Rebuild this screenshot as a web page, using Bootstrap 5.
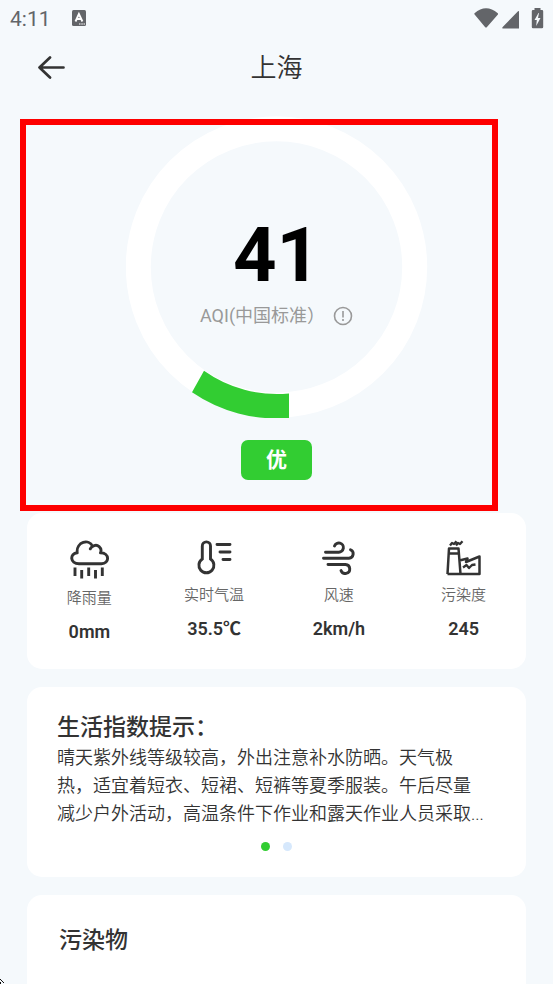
<!DOCTYPE html>
<html lang="zh-CN">
<head>
<meta charset="utf-8">
<meta name="viewport" content="width=device-width, initial-scale=1">
<title>上海</title>
<link href="https://cdn.jsdelivr.net/npm/bootstrap@5.3.0/dist/css/bootstrap.min.css" rel="stylesheet">
<style>
  body { background: #f5f9fc; color: #333; font-family: Roboto, "Noto Sans CJK SC", sans-serif; }
  svg { display: block; }
  .status { height: 38px; padding: 0 10px; color: #636569; font-size: 21px; line-height: 38px; }
  .status-icons { margin: 0 -1px 2px 0; }
  .app-badge { margin: 0 0 2px 21px; }
  .topbar { height: 60px; padding: 0 37px; display: grid; grid-template-columns: 1fr auto 1fr; align-items: center; }
  .topbar h1 { font-size: 26px; line-height: 36px; font-weight: 350; }
  .gauge { height: 413px; padding-top: 18px; }
  .ring { width: 302px; height: 302px; }
  .ring > * { grid-area: 1 / 1; }
  .reading { padding-top: 94px; }
  .aqi { font-size: 76px; line-height: 90px; font-weight: 700; color: #000; }
  .scale { font-size: 18px; line-height: 28px; color: #999; gap: 8px; margin-top: 2px; }
  .level { background: #32cd32; color: #fff; font-size: 21px; line-height: 40px; font-weight: 700; width: 71px; border-radius: 7px; margin-top: 22px; }
  .marker { inset: 21px 55px 0 20px; border: 6px solid #fe0000; pointer-events: none; }
  .panels { padding: 2px 27px 0; gap: 18px; }
  .panel { background: #fff; border-radius: 15px; }
  .stats { padding: 27px 0 25px; }
  .stats dt { font-size: 15px; line-height: 22px; font-weight: 350; color: #666; margin-top: 8px; }
  .stats dd { font-size: 18px; line-height: 24px; font-weight: 600; margin: 11px 0 0; }
  .tips { padding: 25px 38px 26px 30px; }
  .panel h2 { font-size: 23px; line-height: 32px; font-weight: 500; }
  .tips p { font-size: 18px; line-height: 28px; font-weight: 350; }
  .dots { gap: 13px; margin: 14px -8px 0 0; }
  .dot { width: 9px; height: 9px; border: 0; padding: 0; border-radius: 50%; background: #d6e8fc; }
  .dot.active { background: #32cd32; }
  .pollutants { padding: 30px 32px; border-radius: 15px 15px 0 0; }
  .pointer { left: 0; bottom: 0; }
</style>
</head>
<body class="d-flex flex-column min-vh-100">
<div class="status d-flex align-items-center">
  <span>4:11</span>
  <svg class="app-badge" width="14" height="16" viewBox="0 0 14 16" aria-hidden="true"><rect width="14" height="16" rx="1.5" fill="#636569"/><path d="M3.500 11.500 6.900 4 10.400 11.500M4.800 9H9" fill="none" stroke="#fff" stroke-width="1.900"/><path d="M7 14h1.500M9.300 14h1.500M11.500 14H13" stroke="#fff" stroke-width="1.200"/></svg>
  <svg class="status-icons ms-auto" width="70" height="22" viewBox="0 0 70 22" fill="#636569" aria-hidden="true"><path d="M0.500 6.200Q12-3.500 23.800 6.200Q24.300 7 23.700 7.700L13 20Q12 21 11 20L.8 7.700Q0 7 .5 6.200Z"/><path d="M45 4v17.500H29.500q-2 0-.8-1.500L44 4.300Q45 3.500 45 4.500Z"/><path d="M60.500 3V1h6v2h1.500q1.200 0 1.200 1.200V20q0 1.200-1.200 1.200h-9q-1.200 0-1.200-1.200V4.200Q57.800 3 59 3ZM64.500 6 60.500 13h2.300l-.6 6 4.300-8h-2.500l1-5Z" fill-rule="evenodd"/></svg>
</div>
<header class="topbar">
  <button class="btn border-0 p-0 me-auto" type="button" aria-label="返回"><svg width="28" height="24" viewBox="0 0 28 24" fill="none" stroke="#333" stroke-width="2.700" stroke-linecap="round" stroke-linejoin="round"><path d="M26.500 11.500H2.500M13 1.500 2.500 11.500 13 21.500"/></svg></button>
  <h1 class="m-0">上海</h1>
</header>
<main class="d-flex flex-column flex-grow-1">
  <section class="gauge position-relative d-flex flex-column align-items-center">
    <div class="ring d-grid">
      <svg width="302" height="302" viewBox="0 0 302 302" aria-hidden="true"><circle cx="150.500" cy="151" r="138.200" fill="none" stroke="#fff" stroke-width="25"/><path d="M163 302A151 151 0 0 1 66 276.200L78 254.800A126 126 0 0 0 163 277.500Z" fill="#32cd32"/></svg>
      <div class="reading text-center">
        <div class="aqi">41</div>
        <div class="scale d-flex align-items-center justify-content-center"><span>AQI(中国标准）</span><button class="btn border-0 p-0" type="button" aria-label="说明"><svg width="20" height="20" viewBox="0 0 20 20" fill="none" stroke="#999" stroke-width="1.600"><circle cx="10" cy="10" r="8.500"/><path d="M10 5v6.500M10 13v2"/></svg></button></div>
      </div>
    </div>
    <div class="level text-center">优</div>
    <div class="marker position-absolute"></div>
  </section>
  <div class="panels d-flex flex-column flex-grow-1">
    <dl class="panel stats row g-0 m-0 text-center">
      <div class="col">
        <svg class="mx-auto" width="40" height="39" viewBox="0 0 40 39" fill="none" stroke="#333" stroke-width="2.900" stroke-linecap="round" stroke-linejoin="round" aria-hidden="true"><path d="M10 23.700C.8 23.700.5 13.500 8.200 12.800C7 1.500 20.500-1.500 23.500 6.500C28.500 3 33.500 8 31.500 12.800C41 13 40.500 23.700 32.500 23.700ZM23.500 6.500Q22 7.200 21.300 8.800"/><path d="M6 27.500v8.500M12.700 30v8.500M19.700 27.500v8.500M26.500 30v8.500M33.300 27.500v8.500" stroke-width="2.900" stroke-linecap="butt"/></svg>
        <dt>降雨量</dt><dd>0mm</dd>
      </div>
      <div class="col">
        <svg class="mx-auto" width="36" height="36" viewBox="0 0 36 36" fill="none" stroke="#333" stroke-width="2.900" stroke-linecap="round" aria-hidden="true"><path d="M6.300 19V6a4 4 0 0 1 8.200 0V19A7.500 7.500 0 1 1 6.300 19Z"/><path d="M21 4.500h13M24 12h10M27 19.500h7"/></svg>
        <dt>实时气温</dt><dd>35.5℃</dd>
      </div>
      <div class="col">
        <svg class="mx-auto" width="36" height="36" viewBox="0 0 36 36" fill="none" stroke="#333" stroke-width="2.900" stroke-linecap="round" aria-hidden="true"><path d="M4.500 12.200H17.500A4.600 4.600 0 1 0 13.500 6M2.500 18.300H28A4.500 4.500 0 0 0 29.500 9.700M7 24.500H24.500A4.500 4.500 0 1 1 20 30.500"/></svg>
        <dt>风速</dt><dd>2km/h</dd>
      </div>
      <div class="col">
        <svg class="mx-auto" width="36" height="36" viewBox="0 0 36 36" fill="none" stroke="#333" stroke-width="2.500" stroke-linejoin="round" aria-hidden="true"><path d="M1.500 34 3 8.500H12.500L14.500 34M1.500 34H33.500V16.500L20 22L21.500 18.500L13.500 20.500M3 13.500H12.500"/><path d="M4 5.500 6 3 8 4 10.500 1.200M10 5.500 12 3 14 4 16.500 1.200M17 27.500 20.500 25 23 28 26 25 29.500 24.500" stroke-width="2.300"/></svg>
        <dt>污染度</dt><dd>245</dd>
      </div>
    </dl>
    <section class="panel tips">
      <h2 class="m-0">生活指数提示：</h2>
      <p class="m-0">晴天紫外线等级较高，外出注意补水防晒。天气极热，适宜着短衣、短裙、短裤等夏季服装。午后尽量减少户外活动，高温条件下作业和露天作业人员采取...</p>
      <div class="dots d-flex justify-content-center"><button class="dot active" type="button" aria-label="第 1 页"></button><button class="dot" type="button" aria-label="第 2 页"></button></div>
    </section>
    <section class="panel pollutants flex-grow-1"><h2 class="m-0">污染物</h2></section>
  </div>
</main>
<svg class="pointer position-fixed" width="5" height="5" viewBox="0 0 5 5" aria-hidden="true"><path d="M0 0h1v1h1v1h1v1h1v1h-1v-1h-1v-1h-1v-1h-1ZM0 3h1v2h-1Z" fill="#111"/></svg>
<script src="https://cdn.jsdelivr.net/npm/bootstrap@5.3.0/dist/js/bootstrap.bundle.min.js"></script>
</body>
</html>
